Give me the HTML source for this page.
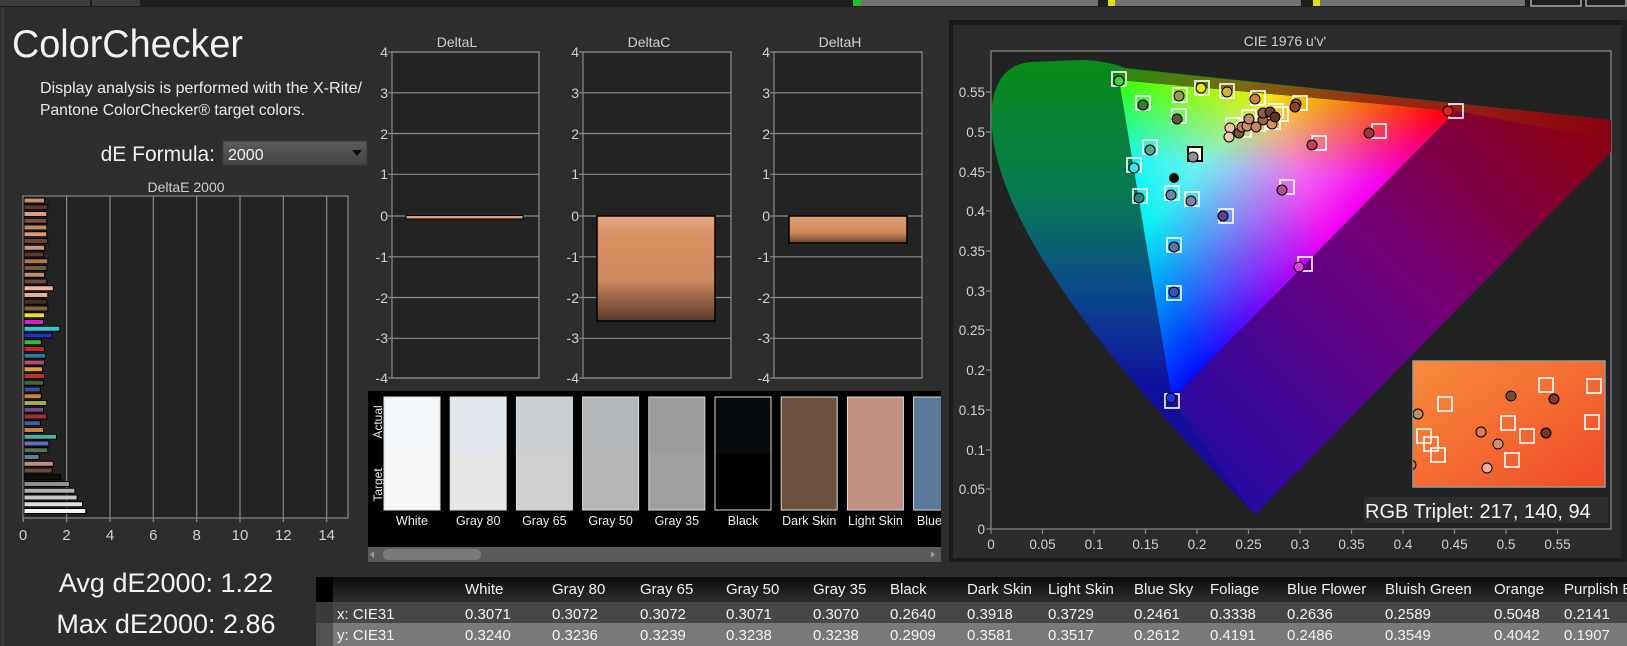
<!DOCTYPE html>
<html><head><meta charset="utf-8"><style>
html,body{margin:0;padding:0;background:#2d2d2d;width:1627px;height:646px;overflow:hidden}
svg{display:block;font-family:"Liberation Sans",sans-serif}
</style></head><body>
<svg width="1627" height="646" viewBox="0 0 1627 646" xmlns="http://www.w3.org/2000/svg">
<defs>
<linearGradient id="dd" x1="0" y1="0" x2="0" y2="1"><stop offset="0" stop-color="#5c5c5c"/><stop offset="1" stop-color="#444"/></linearGradient>
<linearGradient id="barC" x1="0" y1="0" x2="0" y2="1"><stop offset="0" stop-color="#e6aa88"/><stop offset="0.2" stop-color="#d88e60"/><stop offset="0.6" stop-color="#d08a60"/><stop offset="1" stop-color="#5a3a2a"/></linearGradient>
<linearGradient id="barH" x1="0" y1="0" x2="0" y2="1"><stop offset="0" stop-color="#e0a078"/><stop offset="0.6" stop-color="#d48a5c"/><stop offset="1" stop-color="#6a4430"/></linearGradient>
<linearGradient id="hdr" x1="0" y1="0" x2="0" y2="1"><stop offset="0" stop-color="#0c0c0c"/><stop offset="1" stop-color="#2e2e2e"/></linearGradient>
<linearGradient id="hsL" gradientUnits="userSpaceOnUse" x1="0" y1="60" x2="0" y2="515"><stop offset="0" stop-color="#0a8a18"/><stop offset="0.3" stop-color="#087a55"/><stop offset="0.5" stop-color="#0a4a8a"/><stop offset="0.72" stop-color="#1010a0"/><stop offset="1" stop-color="#200890"/></linearGradient>
<linearGradient id="hsT" gradientUnits="userSpaceOnUse" x1="1119" y1="0" x2="1611" y2="0"><stop offset="0" stop-color="#2a8a10"/><stop offset="0.25" stop-color="#7a6a10"/><stop offset="0.5" stop-color="#9a3010"/><stop offset="1" stop-color="#8a0010"/></linearGradient>
<linearGradient id="hsR" gradientUnits="userSpaceOnUse" x1="1560" y1="130" x2="1220" y2="460"><stop offset="0" stop-color="#8a0018"/><stop offset="0.45" stop-color="#74007a"/><stop offset="1" stop-color="#2a0aa0"/></linearGradient>
<linearGradient id="gG" gradientUnits="userSpaceOnUse" x1="1119" y1="80" x2="1314" y2="255"><stop offset="0" stop-color="#00ff00"/><stop offset="0.45" stop-color="#00f000"/><stop offset="1" stop-color="#000"/></linearGradient>
<linearGradient id="gR" gradientUnits="userSpaceOnUse" x1="1456" y1="111" x2="1145" y2="240"><stop offset="0" stop-color="#ff0000"/><stop offset="0.5" stop-color="#f00000"/><stop offset="1" stop-color="#000"/></linearGradient>
<linearGradient id="gB" gradientUnits="userSpaceOnUse" x1="1172" y1="400" x2="1200" y2="85"><stop offset="0" stop-color="#0000ff"/><stop offset="0.75" stop-color="#0000f0"/><stop offset="1" stop-color="#000"/></linearGradient>
<linearGradient id="ins" x1="0" y1="0" x2="1" y2="1"><stop offset="0" stop-color="#f88c3c"/><stop offset="1" stop-color="#f04a28"/></linearGradient>
<clipPath id="swc"><rect x="368" y="391" width="573" height="156"/></clipPath>
<clipPath id="plotc"><rect x="991" y="51" width="620" height="478"/></clipPath>
</defs>

<rect x="0" y="0" width="1627" height="7" fill="#1e1e1e"/>
<rect x="0" y="0" width="90" height="6" fill="#3c3c3c"/>
<rect x="92" y="0" width="48" height="6" fill="#3c3c3c"/>
<rect x="853" y="0" width="245" height="6" fill="#727272"/><rect x="853" y="0" width="8" height="6" fill="#20c020"/>
<rect x="1108" y="0" width="193" height="6" fill="#727272"/><rect x="1108" y="0" width="7" height="6" fill="#e0e010"/>
<rect x="1313" y="0" width="212" height="6" fill="#727272"/><rect x="1313" y="0" width="7" height="6" fill="#e0e010"/>
<rect x="1531" y="-2" width="50" height="8" fill="none" stroke="#aaa" stroke-width="1.5"/>
<rect x="1586" y="-2" width="40" height="8" fill="none" stroke="#aaa" stroke-width="1.5"/>
<rect x="2" y="7" width="1.5" height="639" fill="#444"/>

<text x="12" y="57" font-size="39" fill="#f2f2f2" textLength="231" lengthAdjust="spacingAndGlyphs">ColorChecker</text>
<text x="40" y="93" font-size="16" fill="#eaeaea" textLength="322" lengthAdjust="spacingAndGlyphs">Display analysis is performed with the X-Rite/</text>
<text x="40" y="115" font-size="16" fill="#eaeaea" textLength="265" lengthAdjust="spacingAndGlyphs">Pantone ColorChecker® target colors.</text>
<text x="215" y="161" font-size="21" fill="#f0f0f0" text-anchor="end">dE Formula:</text>
<rect x="223" y="141" width="144" height="24" fill="url(#dd)" stroke="#3a3a3a"/>
<text x="228" y="160" font-size="16" fill="#f0f0f0">2000</text>
<path d="M352 150 L362 150 L357 156 Z" fill="#111"/>

<text x="186" y="192" font-size="14" fill="#cfcfcf" text-anchor="middle">DeltaE 2000</text>
<rect x="23" y="196" width="325" height="322" fill="#232323" stroke="#8a8a8a" stroke-width="1.2"/>
<g stroke="#8a8a8a" stroke-width="1.2">
<line x1="66.6" y1="196" x2="66.6" y2="522"/><line x1="110" y1="196" x2="110" y2="522"/><line x1="153.3" y1="196" x2="153.3" y2="522"/><line x1="196.7" y1="196" x2="196.7" y2="522"/><line x1="240" y1="196" x2="240" y2="522"/><line x1="283.3" y1="196" x2="283.3" y2="522"/><line x1="326.7" y1="196" x2="326.7" y2="522"/><line x1="23.3" y1="518" x2="23.3" y2="522"/>
</g>
<g font-size="15" fill="#d0d0d0" text-anchor="middle">
<text x="23" y="540">0</text><text x="66.6" y="540">2</text><text x="110" y="540">4</text><text x="153.3" y="540">6</text><text x="196.7" y="540">8</text><text x="240" y="540">10</text><text x="283.3" y="540">12</text><text x="326.7" y="540">14</text>
</g>
<g stroke="#000" stroke-width="1">
<rect x="24" y="198" width="20.6" height="5" fill="#c89070"/>
<rect x="24" y="204.75" width="23.8" height="5" fill="#5a3a28"/>
<rect x="24" y="211.5" width="22.8" height="5" fill="#d8a080"/>
<rect x="24" y="218.25" width="22.8" height="5" fill="#7a5038"/>
<rect x="24" y="225" width="22.8" height="5" fill="#c08868"/>
<rect x="24" y="231.75" width="22.8" height="5" fill="#e09a78"/>
<rect x="24" y="238.5" width="23.8" height="5" fill="#6a4430"/>
<rect x="24" y="245.25" width="20.6" height="5" fill="#c89878"/>
<rect x="24" y="252" width="19.5" height="5" fill="#5a3a2a"/>
<rect x="24" y="258.75" width="23.8" height="5" fill="#b07848"/>
<rect x="24" y="265.5" width="22.8" height="5" fill="#7a5a3a"/>
<rect x="24" y="272.25" width="20.6" height="5" fill="#c09070"/>
<rect x="24" y="279" width="22.8" height="5" fill="#6a4a38"/>
<rect x="24" y="285.75" width="29.3" height="5" fill="#f0b898"/>
<rect x="24" y="292.5" width="23.8" height="5" fill="#e8b090"/>
<rect x="24" y="299.25" width="22.8" height="5" fill="#4a3020"/>
<rect x="24" y="306" width="23.8" height="5" fill="#8a6048"/>
<rect x="24" y="312.75" width="20.6" height="5" fill="#e8e020"/>
<rect x="24" y="319.5" width="19.5" height="5" fill="#d020d0"/>
<rect x="24" y="326.25" width="35.8" height="5" fill="#30c8d0"/>
<rect x="24" y="333" width="28.2" height="5" fill="#2030c0"/>
<rect x="24" y="339.75" width="17.3" height="5" fill="#30c030"/>
<rect x="24" y="346.5" width="20.6" height="5" fill="#d02020"/>
<rect x="24" y="353.25" width="21.7" height="5" fill="#2080a0"/>
<rect x="24" y="360" width="20.6" height="5" fill="#b05070"/>
<rect x="24" y="366.75" width="18.4" height="5" fill="#e0a030"/>
<rect x="24" y="373.5" width="20.6" height="5" fill="#c03030"/>
<rect x="24" y="380.25" width="19.5" height="5" fill="#3a6a3a"/>
<rect x="24" y="387" width="16.3" height="5" fill="#4050a0"/>
<rect x="24" y="393.75" width="17.3" height="5" fill="#d08040"/>
<rect x="24" y="400.5" width="22.8" height="5" fill="#a0b040"/>
<rect x="24" y="407.25" width="19.5" height="5" fill="#6a5080"/>
<rect x="24" y="414" width="22.8" height="5" fill="#a03040"/>
<rect x="24" y="420.75" width="16.3" height="5" fill="#4060a0"/>
<rect x="24" y="427.5" width="19.5" height="5" fill="#d08030"/>
<rect x="24" y="434.25" width="32.5" height="5" fill="#50b0a0"/>
<rect x="24" y="441" width="24.9" height="5" fill="#6070c0"/>
<rect x="24" y="447.75" width="23.8" height="5" fill="#5a7050"/>
<rect x="24" y="454.5" width="15.2" height="5" fill="#6080a0"/>
<rect x="24" y="461.25" width="29.3" height="5" fill="#c09080"/>
<rect x="24" y="468" width="28.2" height="5" fill="#6a4a3a"/>
<rect x="24" y="474.75" width="36.8" height="5" fill="#101010"/>
<rect x="24" y="481.5" width="45.5" height="5" fill="#909090"/>
<rect x="24" y="488.25" width="50.9" height="5" fill="#b0b0b0"/>
<rect x="24" y="495" width="53.1" height="5" fill="#c8c8c8"/>
<rect x="24" y="501.75" width="58.5" height="5" fill="#e0e0e0"/>
<rect x="24" y="508.5" width="61.8" height="5" fill="#f4f4f4"/>
</g>
<text x="166" y="592" font-size="27" fill="#f4f4f4" text-anchor="middle">Avg dE2000: 1.22</text>
<text x="166" y="633" font-size="27" fill="#f4f4f4" text-anchor="middle">Max dE2000: 2.86</text>

<g font-size="14" fill="#cfcfcf" text-anchor="middle">
<text x="457" y="47">DeltaL</text><text x="649" y="47">DeltaC</text><text x="840" y="47">DeltaH</text>
</g>
<g fill="#232323" stroke="#8a8a8a" stroke-width="1.2">
<rect x="392" y="52" width="147" height="326"/><rect x="583" y="52" width="148" height="326"/><rect x="774" y="52" width="148" height="326"/>
</g>
<g stroke="#8a8a8a" stroke-width="1.2">
<path d="M388 52H539M388 92.8H539M388 133.5H539M388 174.3H539M388 216H539M388 256.8H539M388 297.5H539M388 338.3H539M388 378H539"/>
<path d="M579 52H731M579 92.8H731M579 133.5H731M579 174.3H731M579 216H731M579 256.8H731M579 297.5H731M579 338.3H731M579 378H731"/>
<path d="M770 52H922M770 92.8H922M770 133.5H922M770 174.3H922M770 216H922M770 256.8H922M770 297.5H922M770 338.3H922M770 378H922"/>
</g>
<g font-size="14" fill="#cfcfcf" text-anchor="end">
<text x="388" y="57">4</text><text x="388" y="98">3</text><text x="388" y="139">2</text><text x="388" y="179">1</text><text x="388" y="221">0</text><text x="388" y="262">-1</text><text x="388" y="303">-2</text><text x="388" y="343">-3</text><text x="388" y="383">-4</text>
<text x="579" y="57">4</text><text x="579" y="98">3</text><text x="579" y="139">2</text><text x="579" y="179">1</text><text x="579" y="221">0</text><text x="579" y="262">-1</text><text x="579" y="303">-2</text><text x="579" y="343">-3</text><text x="579" y="383">-4</text>
<text x="770" y="57">4</text><text x="770" y="98">3</text><text x="770" y="139">2</text><text x="770" y="179">1</text><text x="770" y="221">0</text><text x="770" y="262">-1</text><text x="770" y="303">-2</text><text x="770" y="343">-3</text><text x="770" y="383">-4</text>
</g>
<rect x="406" y="215.5" width="117" height="3.5" fill="#d8a080" stroke="#000"/>
<rect x="597" y="216" width="118" height="105" fill="url(#barC)" stroke="#000" stroke-width="1.5"/>
<rect x="789" y="216" width="118" height="27" fill="url(#barH)" stroke="#000" stroke-width="1.5"/>

<rect x="368" y="391" width="573" height="156" fill="#000"/>
<text transform="translate(382,422) rotate(-90)" font-size="12" fill="#e8e8e8" text-anchor="middle">Actual</text>
<text transform="translate(382,485) rotate(-90)" font-size="12" fill="#e8e8e8" text-anchor="middle">Target</text>
<g clip-path="url(#swc)" stroke="#dcdcdc" stroke-width="1">
<rect x="384" y="397" width="56" height="113" fill="#f6f6f6"/><rect x="384.5" y="397.5" width="55" height="56" fill="#f4f8fa" stroke="none"/>
<rect x="450.2" y="397" width="56" height="113" fill="#e6e6e6"/><rect x="450.7" y="397.5" width="55" height="56" fill="#e2e6ec" stroke="none"/>
<rect x="516.4" y="397" width="56" height="113" fill="#d0d0d0"/><rect x="516.9" y="397.5" width="55" height="56" fill="#cbcfd3" stroke="none"/>
<rect x="582.6" y="397" width="56" height="113" fill="#b6b6b6"/><rect x="583.1" y="397.5" width="55" height="56" fill="#b3b7b9" stroke="none"/>
<rect x="648.8" y="397" width="56" height="113" fill="#a0a0a0"/><rect x="649.3" y="397.5" width="55" height="56" fill="#9b9d9f" stroke="none"/>
<rect x="715" y="397" width="56" height="113" fill="#000"/><rect x="715.5" y="397.5" width="55" height="56" fill="#080b0d" stroke="none"/>
<rect x="781.2" y="397" width="56" height="113" fill="#6e5040"/>
<rect x="847.4" y="397" width="56" height="113" fill="#c09080"/>
<rect x="913.6" y="397" width="56" height="113" fill="#5a7898"/>
</g>
<g font-size="12.5" fill="#f0f0f0" text-anchor="middle" clip-path="url(#swc)">
<text x="412" y="525">White</text><text x="478.2" y="525">Gray 80</text><text x="544.4" y="525">Gray 65</text><text x="610.6" y="525">Gray 50</text><text x="676.8" y="525">Gray 35</text><text x="743" y="525">Black</text><text x="809.2" y="525">Dark Skin</text><text x="875.4" y="525">Light Skin</text><text x="941.6" y="525">Blue Sky</text>
</g>
<rect x="368" y="547" width="573" height="15" fill="#5a5a5a"/>
<rect x="383" y="549" width="98" height="11" rx="5" fill="#7a7a7a"/>
<path d="M374 551 L370 554.5 L374 558Z" fill="#999"/><path d="M931 551 L935 554.5 L931 558Z" fill="#999"/>

<rect x="316" y="577" width="1311" height="25" fill="url(#hdr)"/>
<rect x="316" y="577" width="17" height="25" fill="#000"/>
<rect x="316" y="602" width="1311" height="21" fill="#474747"/>
<rect x="316" y="623" width="1311" height="23" fill="#797979"/>
<rect x="316" y="602" width="17" height="44" fill="#2e2e2e" opacity="0.5"/>
<g font-size="15" fill="#f2f2f2">
<text x="465" y="594">White</text><text x="552" y="594">Gray 80</text><text x="640" y="594">Gray 65</text><text x="726" y="594">Gray 50</text><text x="813" y="594">Gray 35</text><text x="890" y="594">Black</text><text x="967" y="594">Dark Skin</text><text x="1048" y="594">Light Skin</text><text x="1134" y="594">Blue Sky</text><text x="1210" y="594">Foliage</text><text x="1287" y="594">Blue Flower</text><text x="1385" y="594">Bluish Green</text><text x="1494" y="594">Orange</text><text x="1564" y="594">Purplish Blue</text>
<text x="337" y="619">x: CIE31</text><text x="465" y="619">0.3071</text><text x="552" y="619">0.3072</text><text x="640" y="619">0.3072</text><text x="726" y="619">0.3071</text><text x="813" y="619">0.3070</text><text x="890" y="619">0.2640</text><text x="967" y="619">0.3918</text><text x="1048" y="619">0.3729</text><text x="1134" y="619">0.2461</text><text x="1210" y="619">0.3338</text><text x="1287" y="619">0.2636</text><text x="1385" y="619">0.2589</text><text x="1494" y="619">0.5048</text><text x="1564" y="619">0.2141</text>
<text x="337" y="640">y: CIE31</text><text x="465" y="640">0.3240</text><text x="552" y="640">0.3236</text><text x="640" y="640">0.3239</text><text x="726" y="640">0.3238</text><text x="813" y="640">0.3238</text><text x="890" y="640">0.2909</text><text x="967" y="640">0.3581</text><text x="1048" y="640">0.3517</text><text x="1134" y="640">0.2612</text><text x="1210" y="640">0.4191</text><text x="1287" y="640">0.2486</text><text x="1385" y="640">0.3549</text><text x="1494" y="640">0.4042</text><text x="1564" y="640">0.1907</text>
</g>

<rect x="949" y="20" width="678" height="542" fill="#1a1a1a"/>
<rect x="953" y="25" width="668" height="533" fill="#2b2b2b"/>
<rect x="1621" y="20" width="6" height="542" fill="#202020"/>
<text x="1285" y="46" font-size="14" fill="#cfcfcf" text-anchor="middle">CIE 1976 u'v'</text>
<rect x="991" y="51" width="620" height="478" fill="#222" stroke="#8a8a8a" stroke-width="1.2"/>
<g clip-path="url(#plotc)">
<path d="M1255,515 C1150,405 1020,265 995,150 C986,105 993,66 1030,62 L1080,60 C1100,60 1115,64 1125,68 L1611,120 L1611,152 Z" fill="url(#hsL)"/>
<path d="M1119,68 L1611,120 L1611,152 L1456,111 L1119,80 Z" fill="url(#hsT)"/>
<path d="M1456,111 L1611,140 L1611,152 L1255,515 L1172,400 Z" fill="url(#hsR)"/>
<g style="isolation:isolate">
<path d="M1119,80 L1456,111 L1172,400 Z" fill="#000"/>
<path d="M1119,80 L1456,111 L1172,400 Z" fill="url(#gG)" style="mix-blend-mode:screen"/>
<path d="M1119,80 L1456,111 L1172,400 Z" fill="url(#gR)" style="mix-blend-mode:screen"/>
<path d="M1119,80 L1456,111 L1172,400 Z" fill="url(#gB)" style="mix-blend-mode:screen"/>
</g>
<g fill="none" stroke="#fff" stroke-width="1.6">
<rect x="1112" y="72" width="14" height="14"/><rect x="1136" y="96" width="14" height="14"/><rect x="1173" y="88" width="14" height="14"/><rect x="1195" y="81" width="14" height="14"/><rect x="1220" y="84" width="14" height="14"/><rect x="1251" y="91" width="14" height="14"/><rect x="1293" y="96" width="14" height="14"/><rect x="1449" y="104" width="14" height="14"/><rect x="1372" y="124" width="14" height="14"/><rect x="1312" y="136" width="14" height="14"/><rect x="1172" y="109" width="14" height="14"/><rect x="1143" y="140" width="14" height="14"/><rect x="1127" y="158" width="14" height="14"/><rect x="1133" y="189" width="14" height="14"/><rect x="1165" y="186" width="14" height="14"/><rect x="1185" y="192" width="14" height="14"/><rect x="1219" y="209" width="14" height="14"/><rect x="1280" y="180" width="14" height="14"/><rect x="1167" y="238" width="14" height="14"/><rect x="1167" y="286" width="14" height="14"/><rect x="1298" y="257" width="14" height="14"/><rect x="1165" y="394" width="14" height="14"/><rect x="1226" y="118" width="14" height="14"/><rect x="1242" y="110" width="14" height="14"/><rect x="1269" y="104" width="14" height="14"/><rect x="1274" y="107" width="14" height="14"/><rect x="1266" y="115" width="14" height="14"/><rect x="1237" y="123" width="14" height="14"/><rect x="1251" y="117" width="14" height="14"/>
</g>
<rect x="1188" y="147" width="14" height="14" fill="#fff" stroke="#000" stroke-width="2"/>
<g stroke="#000" stroke-width="1">
<circle cx="1119" cy="81" r="5" fill="#40d040"/><circle cx="1143" cy="105" r="5" fill="#3a7a3a"/><circle cx="1179" cy="96" r="5" fill="#9a9a50"/><circle cx="1201" cy="88" r="5" fill="#e8e020"/><circle cx="1227" cy="92" r="5" fill="#d0b040"/><circle cx="1255" cy="99" r="5" fill="#d08040"/><circle cx="1296" cy="104" r="5" fill="#a06040"/><circle cx="1448" cy="111" r="5" fill="#e02020"/><circle cx="1369" cy="133" r="5" fill="#a03040"/><circle cx="1312" cy="145" r="5" fill="#c04060"/><circle cx="1177" cy="119" r="5" fill="#5a5a40"/><circle cx="1150" cy="150" r="5" fill="#60a090"/><circle cx="1193" cy="157" r="5" fill="#909090"/><circle cx="1134" cy="168" r="5" fill="#40e0f0"/><circle cx="1139" cy="198" r="5" fill="#308080"/><circle cx="1171" cy="195" r="5" fill="#7080a0"/><circle cx="1191" cy="201" r="5" fill="#8080a0"/><circle cx="1223" cy="216" r="5" fill="#604090"/><circle cx="1282" cy="190" r="5" fill="#b05090"/><circle cx="1174" cy="247" r="5" fill="#6070a0"/><circle cx="1174" cy="292" r="5" fill="#4050b0"/><circle cx="1299" cy="267" r="5" fill="#e040e0"/><circle cx="1171" cy="398" r="5" fill="#2030e0"/><circle cx="1174" cy="178" r="4.5" fill="#000"/>
<circle cx="1230" cy="128" r="5" fill="#f0c0a0"/><circle cx="1229" cy="137" r="5" fill="#f0c8b0"/><circle cx="1239" cy="133" r="5" fill="#805040"/><circle cx="1242" cy="127" r="5" fill="#c08060"/><circle cx="1247" cy="126" r="5" fill="#d09070"/><circle cx="1249" cy="119" r="5" fill="#c08870"/><circle cx="1256" cy="127" r="5" fill="#c88060"/><circle cx="1263" cy="120" r="5" fill="#a06040"/><circle cx="1263" cy="113" r="5" fill="#906040"/><circle cx="1270" cy="112" r="5" fill="#704030"/><circle cx="1272" cy="124" r="5" fill="#e09060"/><circle cx="1275" cy="117" r="5" fill="#603020"/><circle cx="1295" cy="107" r="5" fill="#904020"/>
</g>
</g>
<g stroke="#8a8a8a" stroke-width="1.2">
<path d="M986 92H991M986 132H991M986 172H991M986 211H991M986 251H991M986 291H991M986 330H991M986 370H991M986 410H991M986 450H991M986 489H991M986 529H991"/>
<path d="M991 529V534M1042.5 529V534M1094 529V534M1145.5 529V534M1197 529V534M1248.5 529V534M1300 529V534M1351.5 529V534M1403 529V534M1454.5 529V534M1506 529V534M1557.5 529V534"/>
</g>
<g font-size="13.5" fill="#d0d0d0" text-anchor="end">
<text x="985" y="97">0.55</text><text x="985" y="137">0.5</text><text x="985" y="177">0.45</text><text x="985" y="216">0.4</text><text x="985" y="256">0.35</text><text x="985" y="296">0.3</text><text x="985" y="335">0.25</text><text x="985" y="375">0.2</text><text x="985" y="415">0.15</text><text x="985" y="455">0.1</text><text x="985" y="494">0.05</text><text x="985" y="534">0</text>
</g>
<g font-size="13.5" fill="#d0d0d0" text-anchor="middle">
<text x="991" y="549">0</text><text x="1042.5" y="549">0.05</text><text x="1094" y="549">0.1</text><text x="1145.5" y="549">0.15</text><text x="1197" y="549">0.2</text><text x="1248.5" y="549">0.25</text><text x="1300" y="549">0.3</text><text x="1351.5" y="549">0.35</text><text x="1403" y="549">0.4</text><text x="1454.5" y="549">0.45</text><text x="1506" y="549">0.5</text><text x="1557.5" y="549">0.55</text>
</g>
<rect x="1413" y="361" width="192" height="126" fill="url(#ins)" stroke="#999" stroke-width="1.5"/>
<svg x="1413" y="361" width="192" height="126" viewBox="1413 361 192 126">
<g fill="none" stroke="#fff" stroke-width="1.6">
<rect x="1438" y="397" width="14" height="14"/><rect x="1539" y="378" width="14" height="14"/><rect x="1587" y="379" width="14" height="14"/><rect x="1501" y="416" width="14" height="14"/><rect x="1585" y="415" width="14" height="14"/><rect x="1417" y="429" width="14" height="14"/><rect x="1424" y="437" width="14" height="14"/><rect x="1520" y="429" width="14" height="14"/><rect x="1431" y="448" width="14" height="14"/><rect x="1505" y="453" width="14" height="14"/>
</g>
<g stroke="#000" stroke-width="1">
<circle cx="1418" cy="414" r="5" fill="#b09070"/><circle cx="1511" cy="396" r="5" fill="#7a4a30"/><circle cx="1554" cy="399" r="5" fill="#7a3a30"/><circle cx="1481" cy="432" r="5" fill="#d08060"/><circle cx="1546" cy="433" r="5" fill="#6a3a28"/><circle cx="1498" cy="444" r="5" fill="#d09070"/><circle cx="1487" cy="468" r="5" fill="#f0b090"/><circle cx="1411" cy="465" r="5" fill="#c08060"/>
</g>
</svg>
<rect x="1364" y="497" width="244" height="26" fill="#2e2e2e"/>
<text x="1365" y="518" font-size="20" fill="#f4f4f4">RGB Triplet: 217, 140, 94</text>
</svg>
</body></html>
